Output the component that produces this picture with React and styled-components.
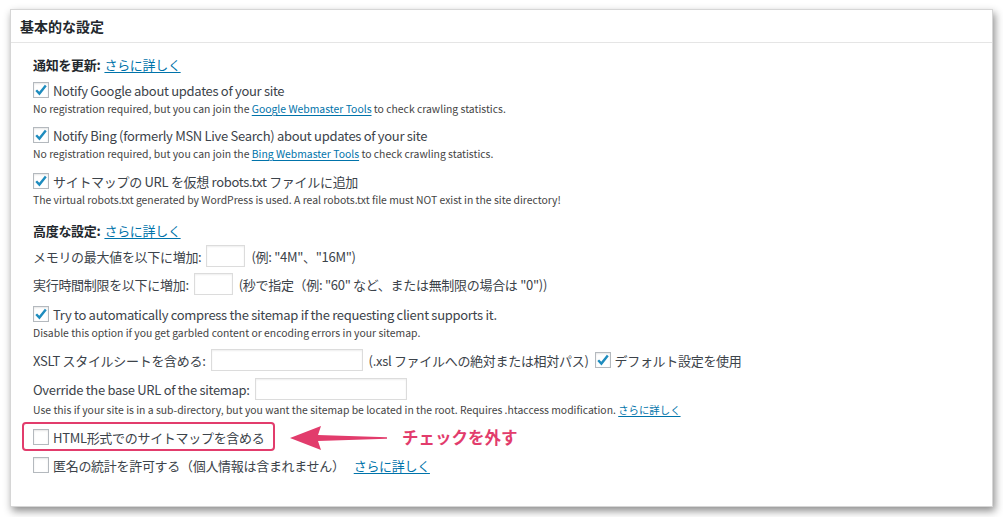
import React from "react";
import styled, { createGlobalStyle } from "styled-components";

const Global = createGlobalStyle`
  html, body { margin: 0; padding: 0; background: #fff; }
  body {
    font-family: "Noto Sans CJK JP", "Noto Sans", sans-serif;
    color: #32373c;
  }
`;

const Page = styled.div`
  width: 1003px;
  height: 517px;
  box-sizing: border-box;
  padding: 9px 10px 10px 10px;
`;

const Panel = styled.section`
  width: 983px;
  height: 498px;
  box-sizing: border-box;
  background: #fff;
  border: 1px solid #d6d6d6;
  box-shadow: 2px 4px 8px rgba(0, 0, 0, 0.45);
  display: flex;
  flex-direction: column;
`;

const Header = styled.h2`
  margin: 0;
  height: 33px;
  box-sizing: border-box;
  padding: 0 9px;
  display: flex;
  align-items: center;
  font-size: 14px;
  font-weight: 700;
  color: #23282d;
  border-bottom: 1px solid #e5e5e5;
`;

const Body = styled.div`
  padding: 11px 0 0 22px;
  display: flex;
  flex-direction: column;
  align-items: flex-start;
`;

const Line = styled.div`
  position: relative;
  display: flex;
  align-items: center;
  height: ${(p) => p.$h || 20}px;
  margin-top: ${(p) => p.$mt || 0}px;
  font-size: 13px;
  letter-spacing: -0.3px;
  color: #3c434a;
  white-space: nowrap;
`;

const Note = styled.p`
  margin: ${(p) => p.$mt || 1}px 0 0 0;
  height: 16px;
  line-height: 16px;
  font-size: 10.4px;
  color: #444;
  white-space: nowrap;
`;

const Label = styled.strong`
  font-weight: 700;
  color: #23282d;
  margin-right: 4px;
`;

const Link = styled.a`
  color: #0073aa;
  text-decoration: underline;
  text-underline-offset: 2px;
  margin-left: ${(p) => p.$ml || 0}px;
`;

const Box = styled.span`
  width: 16px;
  height: 16px;
  box-sizing: border-box;
  flex: none;
  border: 1px solid #b4b9be;
  background: #fff;
  box-shadow: inset 0 1px 2px rgba(0, 0, 0, 0.1);
  display: inline-flex;
  align-items: center;
  justify-content: center;
  margin-right: ${(p) => p.$mr ?? 4}px;
  margin-left: ${(p) => p.$ml || 0}px;
`;

const Field = styled.input`
  width: ${(p) => p.$w}px;
  height: 22px;
  box-sizing: border-box;
  border: 1px solid #dcdcdc;
  box-shadow: inset 0 1px 2px rgba(0, 0, 0, 0.07);
  background: #fff;
  margin: 0 ${(p) => p.$mr ?? 6}px 0 ${(p) => p.$ml ?? 5}px;
  padding: 0;
  outline: none;
`;

const Highlight = styled.span`
  position: absolute;
  left: -11px;
  top: -5px;
  width: 253px;
  height: 29px;
  box-sizing: border-box;
  border: 2.5px solid #e23c6c;
  border-radius: 4px;
  pointer-events: none;
`;

const ArrowMark = styled.svg`
  position: absolute;
  left: 257px;
  top: -1px;
`;

const Callout = styled.span`
  position: absolute;
  left: 369px;
  top: 0;
  line-height: 20px;
  font-size: 16.5px;
  letter-spacing: 0;
  font-weight: 700;
  color: #e23c6c;
`;

const Check = ({ checked, ...rest }) => (
  <Box {...rest}>
    {checked && (
      <svg width="14" height="14" viewBox="0 0 14 14">
        <path
          d="M2.2 7.2 L5.4 10.6 L11.8 2.6"
          fill="none"
          stroke="#1e8cbe"
          strokeWidth="2.4"
          strokeLinejoin="miter"
        />
      </svg>
    )}
  </Box>
);

export default function App() {
  return (
    <>
      <Global />
      <Page>
        <Panel>
          <Header>基本的な設定</Header>
          <Body>
            <Line>
              <Label>通知を更新:</Label>
              <Link href="#">さらに詳しく</Link>
            </Line>

            <Line $mt={6}>
              <Check checked />
              Notify Google about updates of your site
            </Line>
            <Note>
              No registration required, but you can join the{" "}
              <Link href="#">Google Webmaster Tools</Link> to check crawling statistics.
            </Note>

            <Line $mt={8}>
              <Check checked />
              Notify Bing (formerly MSN Live Search) about updates of your site
            </Line>
            <Note>
              No registration required, but you can join the{" "}
              <Link href="#">Bing Webmaster Tools</Link> to check crawling statistics.
            </Note>

            <Line $mt={9}>
              <Check checked />
              サイトマップの URL を仮想 robots.txt ファイルに追加
            </Line>
            <Note>
              The virtual robots.txt generated by WordPress is used. A real robots.txt file must NOT exist in the site directory!
            </Note>

            <Line $mt={12}>
              <Label>高度な設定:</Label>
              <Link href="#">さらに詳しく</Link>
            </Line>

            <Line $h={24} $mt={4}>
              メモリの最大値を以下に増加:
              <Field $w={39} readOnly />
              (例: "4M"、"16M")
            </Line>
            <Line $h={24} $mt={4}>
              実行時間制限を以下に増加:
              <Field $w={39} readOnly />
              (秒で指定（例: "60" など、または無制限の場合は "0"))
            </Line>

            <Line $mt={8}>
              <Check checked />
              Try to automatically compress the sitemap if the requesting client supports it.
            </Line>
            <Note>
              Disable this option if you get garbled content or encoding errors in your sitemap.
            </Note>

            <Line $h={24} $mt={7}>
              XSLT スタイルシートを含める:
              <Field $w={152} readOnly />
              (.xsl ファイルへの絶対または相対パス)
              <Check checked $ml={6} />
              デフォルト設定を使用
            </Line>

            <Line $h={24} $mt={5}>
              Override the base URL of the sitemap:
              <Field $w={152} readOnly />
            </Line>
            <Note>
              Use this if your site is in a sub-directory, but you want the sitemap be located in the root. Requires .htaccess modification.{" "}
              <Link href="#">さらに詳しく</Link>
            </Note>

            <Line $mt={9}>
              <Highlight />
              <Check />
              HTML形式でのサイトマップを含める
              <ArrowMark width="98" height="24" viewBox="0 0 98 24">
                <polygon
                  points="0,12 31,0 28,9 97,11.3 97,12.7 28,15 31,24"
                  fill="#e23c6c"
                />
              </ArrowMark>
              <Callout>チェックを外す</Callout>
            </Line>

            <Line $mt={8}>
              <Check />
              匿名の統計を許可する（個人情報は含まれません）
              <Link href="#" $ml={9}>さらに詳しく</Link>
            </Line>
          </Body>
        </Panel>
      </Page>
    </>
  );
}
